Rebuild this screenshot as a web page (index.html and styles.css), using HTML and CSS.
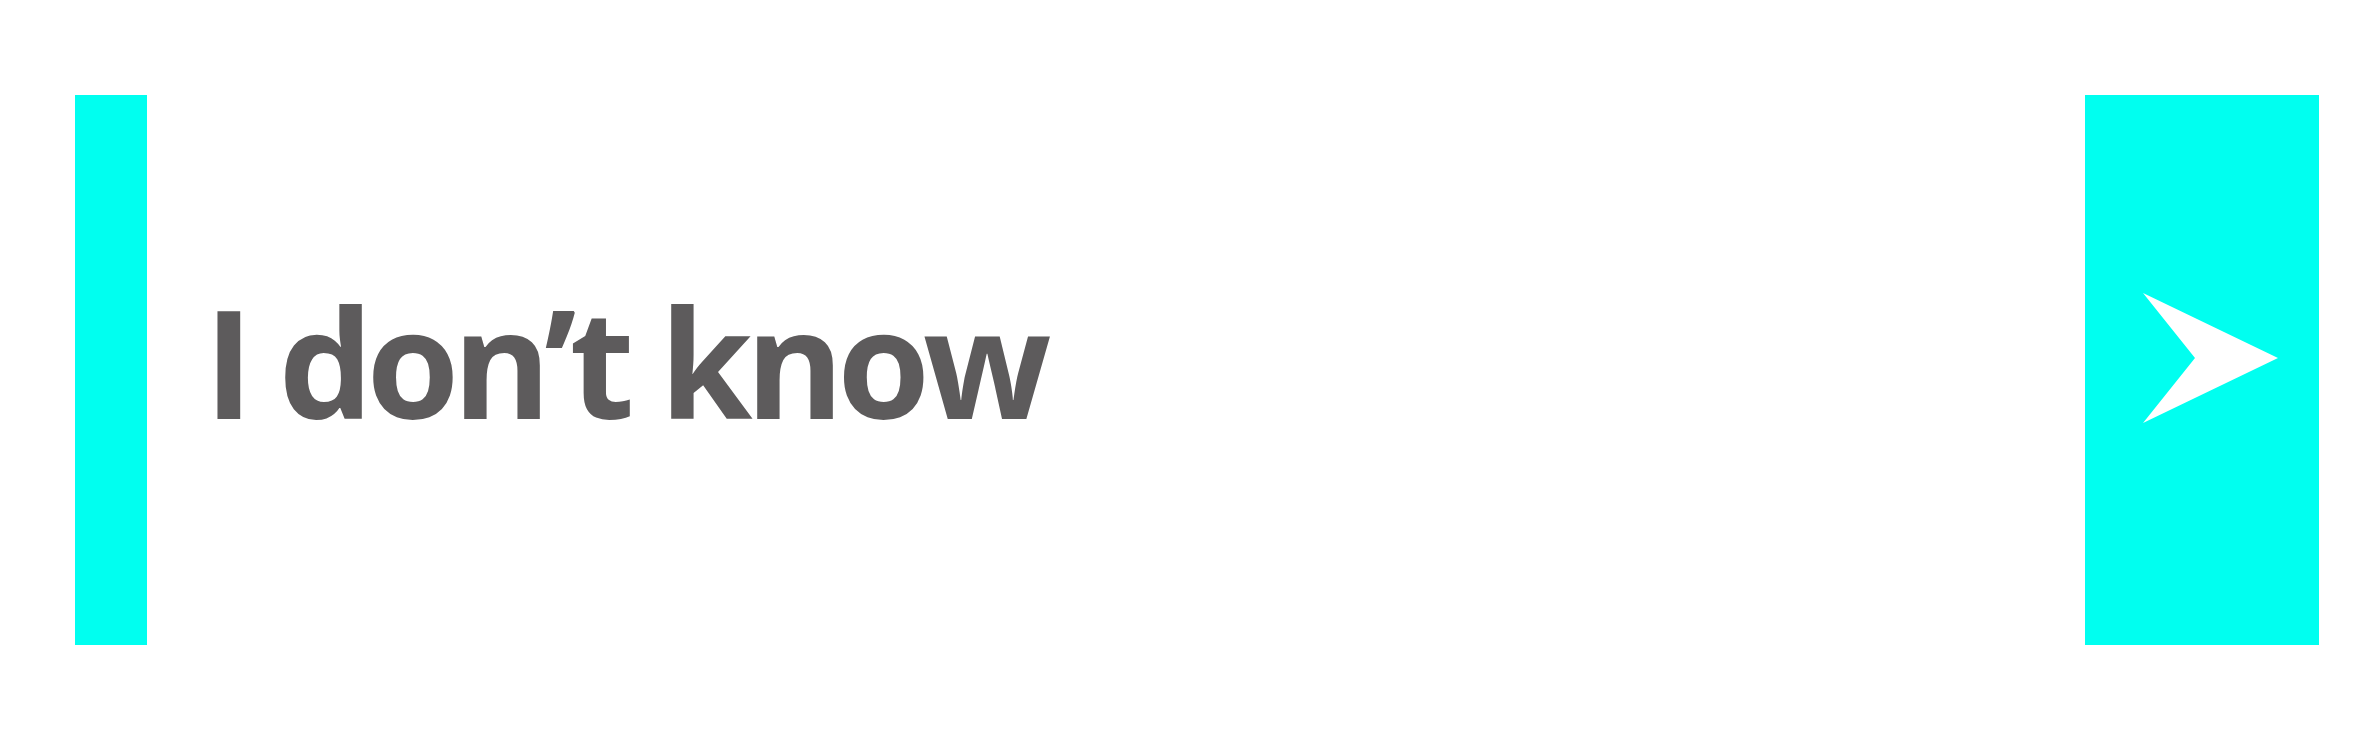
FILE: index.html
```html
<!DOCTYPE html>
<html lang="en">
<head>
<meta charset="utf-8">
<title>I don't know</title>
<link rel="stylesheet" href="styles.css">
</head>
<body>
  <div class="row">
    <div class="bar"></div>
    <div class="label">I don’t know</div>
    <div class="next">
      <svg class="arrow" viewBox="0 0 234 550" width="234" height="550" aria-hidden="true">
        <polygon points="58,198 193,263 58,328 110,263" fill="#ffffff"/>
      </svg>
    </div>
  </div>
</body>
</html>
```

FILE: styles.css
```css
html, body {
  margin: 0;
  padding: 0;
  background: #ffffff;
}

.row {
  display: flex;
  align-items: flex-start;
  padding-top: 95px;
  height: 550px;
  padding-left: 75px;
  padding-right: 60px;
}

.bar {
  width: 72px;
  height: 550px;
  background: #00fff0;
  flex: none;
}

.label {
  flex: 1;
  margin-left: 57px;
  margin-top: 191px;
  font-family: "Open Sans", "Noto Sans", sans-serif;
  font-weight: 700;
  font-size: 150px;
  line-height: 150px;
  letter-spacing: -7px;
  color: #5d5b5c;
  white-space: nowrap;
}

.next {
  width: 234px;
  height: 550px;
  background: #00fff0;
  flex: none;
}

.arrow {
  display: block;
}
```
